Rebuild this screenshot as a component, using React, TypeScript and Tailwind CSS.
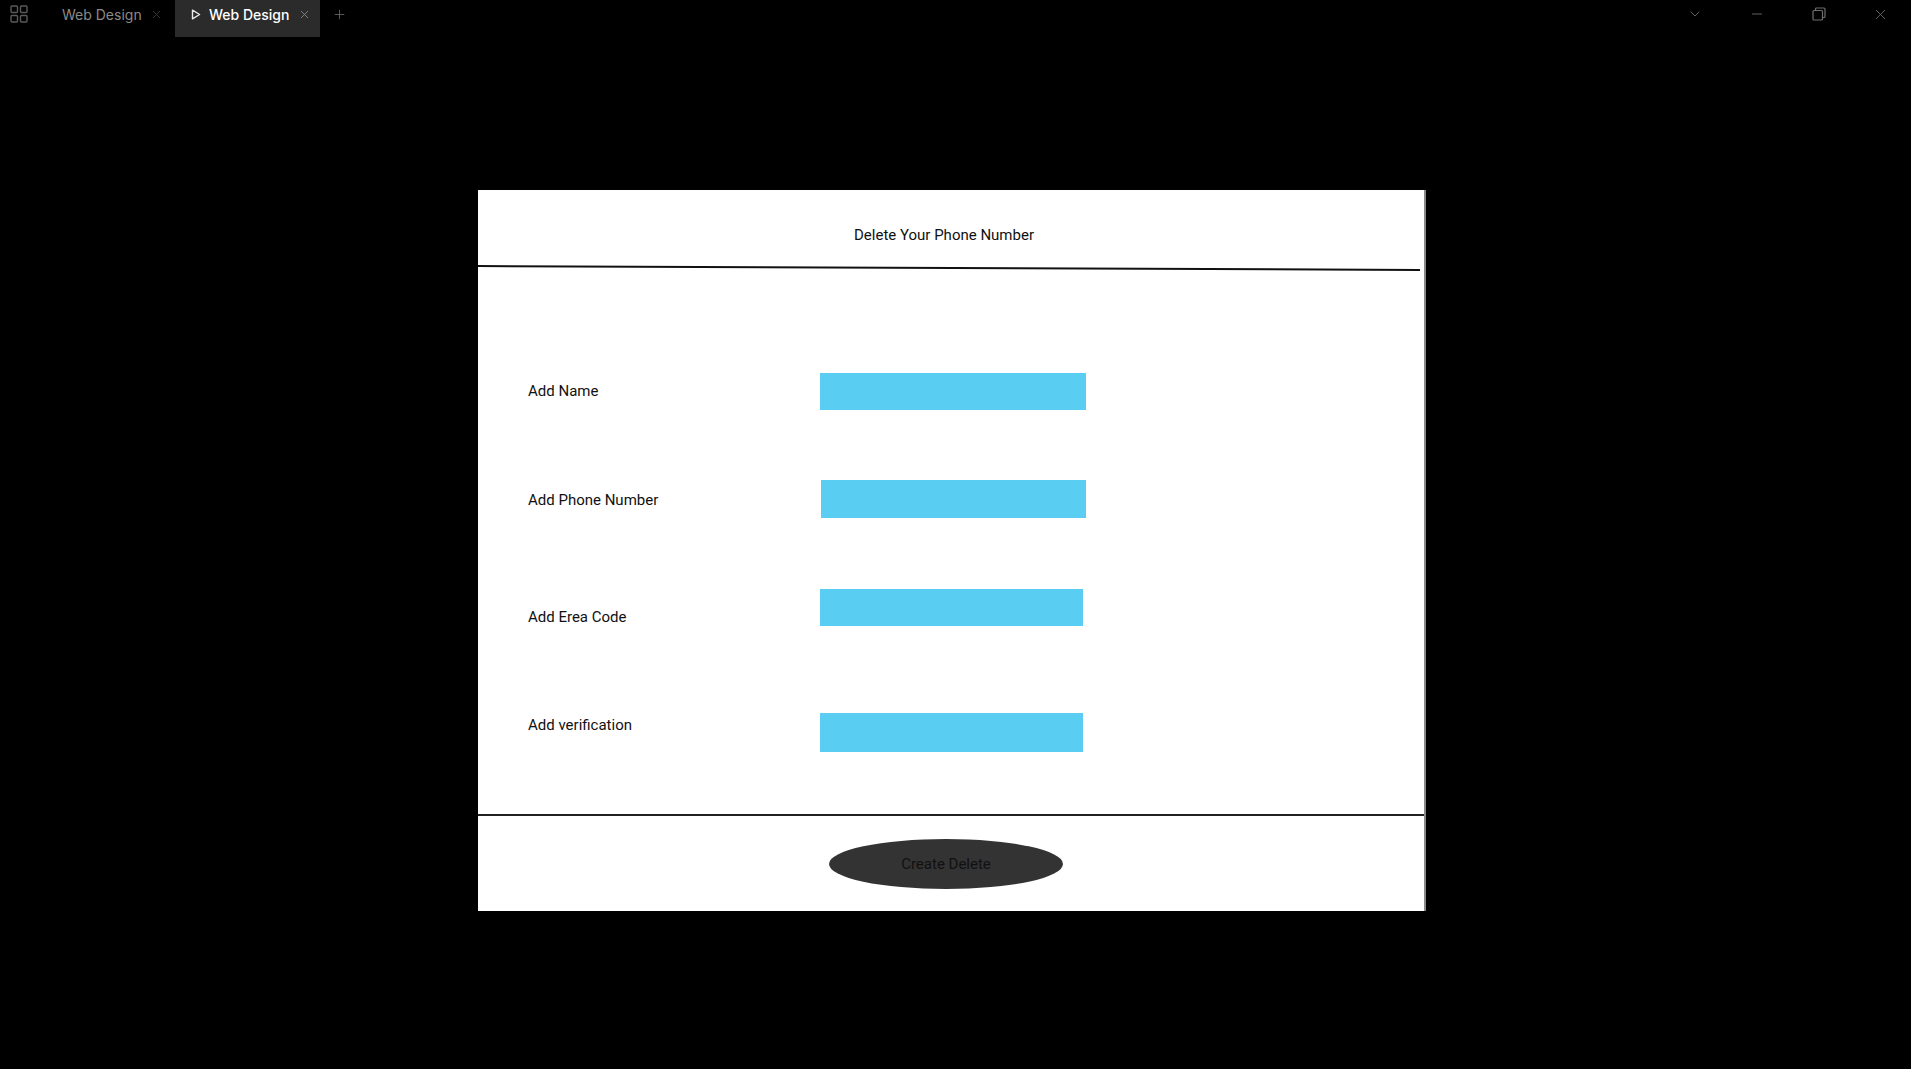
import {X, Plus, ChevronDown, Minus} from "lucide-react";

interface Field {
    label: string;
    gap: string;
    labelTop: string;
    inputClass: string;
}

// rows of the form, spacing taken from the mockup
const fields: Field[] = [
    {label: "Add Name", gap: "mt-[104px]", labelTop: "mt-[9px]", inputClass: "w-[266px] h-[37px]"},
    {label: "Add Phone Number", gap: "mt-[70px]", labelTop: "mt-[11px]", inputClass: "w-[265px] h-[38px] ml-[1px]"},
    {label: "Add Erea Code", gap: "mt-[71px]", labelTop: "mt-[19px]", inputClass: "w-[263px] h-[37px]"},
    {label: "Add verification", gap: "mt-[87px]", labelTop: "mt-[3px]", inputClass: "w-[263px] h-[39px]"},
];

function TitleBar() {
    return (
        <div className="flex h-[37px] items-stretch bg-black font-['Inter',sans-serif] text-[14px]">
            <div className="flex items-center pb-[9px] ml-[10px] mr-[34px]">
                <svg width="18" height="18" viewBox="0 0 18 18" fill="none" stroke="#5a5a5a" strokeWidth="1.4">
                    <rect x="1" y="1" width="6.5" height="6.5" rx="1"/>
                    <rect x="10.5" y="1" width="6.5" height="6.5" rx="1"/>
                    <rect x="1" y="10.5" width="6.5" height="6.5" rx="1"/>
                    <rect x="10.5" y="10.5" width="6.5" height="6.5" rx="1"/>
                </svg>
            </div>
            <div className="flex items-center pb-[9px] w-[113px]">
                <span className="text-[#8a8a8a]">Web Design</span>
                <X className="ml-[8px] text-[#3c3c3c]" size={13} strokeWidth={1.6}/>
            </div>
            <div className="flex items-center pb-[9px] w-[145px] bg-[#2b2b2b] pl-[16px]">
                <svg width="10" height="11" viewBox="0 0 10 11" fill="none" stroke="#e8e8e8" strokeWidth="1.4">
                    <path d="M1.5 1.2 L8.6 5.5 L1.5 9.8 Z" strokeLinejoin="round"/>
                </svg>
                <span className="ml-[8px] text-white font-medium">Web Design</span>
                <X className="ml-[9px] text-[#8a8a8a]" size={13} strokeWidth={1.6}/>
            </div>
            <div className="flex items-center pb-[9px] ml-[12px]">
                <Plus className="text-[#6a6a6a]" size={15} strokeWidth={1.3}/>
            </div>
            <div className="flex-1"/>
            <div className="flex items-center pb-[9px]">
                <ChevronDown className="text-[#6e6e6e] mr-[46px]" size={16} strokeWidth={1.3}/>
                <Minus className="text-[#6e6e6e] mr-[47px]" size={16} strokeWidth={1.3}/>
                <svg className="mr-[46px]" width="14" height="14" viewBox="0 0 14 14" fill="none" stroke="#6e6e6e" strokeWidth="1.2">
                    <rect x="1" y="3.5" width="9.5" height="9.5" rx="1"/>
                    <path d="M3.5 3.5 V2 A1 1 0 0 1 4.5 1 H12 A1 1 0 0 1 13 2 V9.5 A1 1 0 0 1 12 10.5 H10.5"/>
                </svg>
                <X className="text-[#6e6e6e] mr-[22px]" size={17} strokeWidth={1.2}/>
            </div>
        </div>
    );
}

export default function App() {
    return (
        <div className="min-h-[1069px] w-full bg-black">
            <TitleBar/>
            <div className="ml-[478px] mt-[153px] w-[948px] h-[721px] bg-white border-r-[2px] border-[#8a8a8a] font-['Roboto',sans-serif] text-[15px] text-[#111] flex flex-col">
                <div className="h-[77px] pt-[36px] leading-[18px] text-center pr-[14px]">
                    Delete Your Phone Number
                </div>
                {/* header separator leans a little, like in the mockup */}
                <div className="h-[2px] w-[942px] bg-[#111] rotate-[0.24deg]"/>
                {fields.map((f) => (
                    <div key={f.label} className={`flex ${f.gap}`}>
                        <div className={`ml-[50px] w-[292px] leading-[18px] ${f.labelTop}`}>{f.label}</div>
                        <div className={`bg-[#59cdf2] ${f.inputClass}`}/>
                    </div>
                ))}
                <div className="mt-[62px] h-[2px] w-full bg-[#222]"/>
                <div className="mt-[23px] ml-[351px]">
                    <button className="w-[234px] h-[50px] rounded-[50%] bg-[#333333] text-[#111] text-[15px] font-['Roboto',sans-serif]">
                        Create Delete
                    </button>
                </div>
            </div>
        </div>
    );
}
